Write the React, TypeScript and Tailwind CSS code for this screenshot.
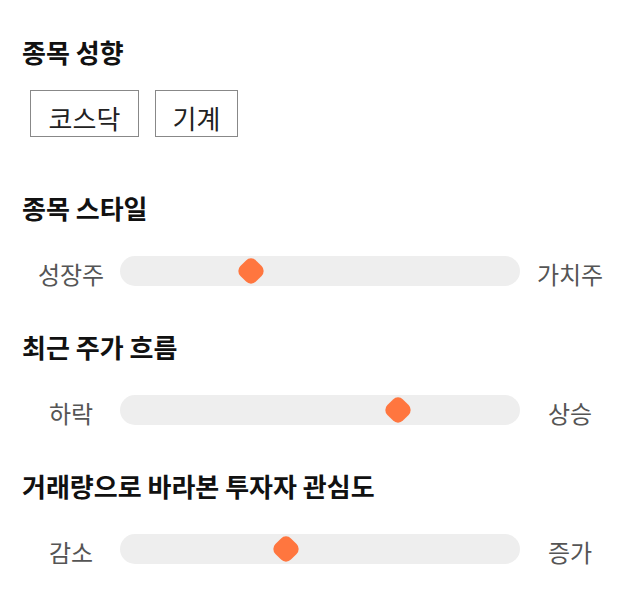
const SLIDERS = [
  { title: "종목 스타일", left: "성장주", right: "가치주", pos: 131 },
  { title: "최근 주가 흐름", left: "하락", right: "상승", pos: 278 },
  { title: "거래량으로 바라본 투자자 관심도", left: "감소", right: "증가", pos: 166 },
];

function Slider({ left, right, pos }: { left: string; right: string; pos: number }) {
  return (
    <div className="flex items-center h-[30px] mt-[33px]">
      <div className="w-[98px] text-center text-[24px] leading-[30px] pt-[6px] text-[#555]">{left}</div>
      <div className="relative w-[400px] h-[30px] rounded-full bg-[#eeeeee]">
        <div
          className="absolute top-[4px] w-[22px] h-[22px] -ml-[11px] rotate-45 rounded-[7px] bg-[#ff763f]"
          style={{ left: pos }}
        />
      </div>
      <div className="w-[100px] text-center text-[24px] leading-[30px] pt-[6px] text-[#555]">{right}</div>
    </div>
  );
}

export default function App() {
  return (
    <div className="w-[640px] h-[606px] bg-white pl-[22px] pt-[37px] font-['Noto_Sans_CJK_KR','Noto_Sans',sans-serif]">
      <h2 className="text-[26px] leading-[30px] font-bold text-[#111]">종목 성향</h2>
      <div className="flex gap-4 ml-2 mt-[23px]">
        <button className="w-[109px] h-[47px] border border-[#888] text-[26px] leading-[30px] text-[#222] bg-white pt-[9px]">코스닥</button>
        <button className="w-[83px] h-[47px] border border-[#888] text-[26px] leading-[30px] text-[#222] bg-white pt-[9px]">기계</button>
      </div>
      {SLIDERS.map((s, i) => (
        <div key={s.title} className={i === 0 ? "mt-[56px]" : "mt-[46px]"}>
          <h2 className="text-[26px] leading-[30px] font-bold text-[#111]">{s.title}</h2>
          <Slider left={s.left} right={s.right} pos={s.pos} />
        </div>
      ))}
    </div>
  );
}
